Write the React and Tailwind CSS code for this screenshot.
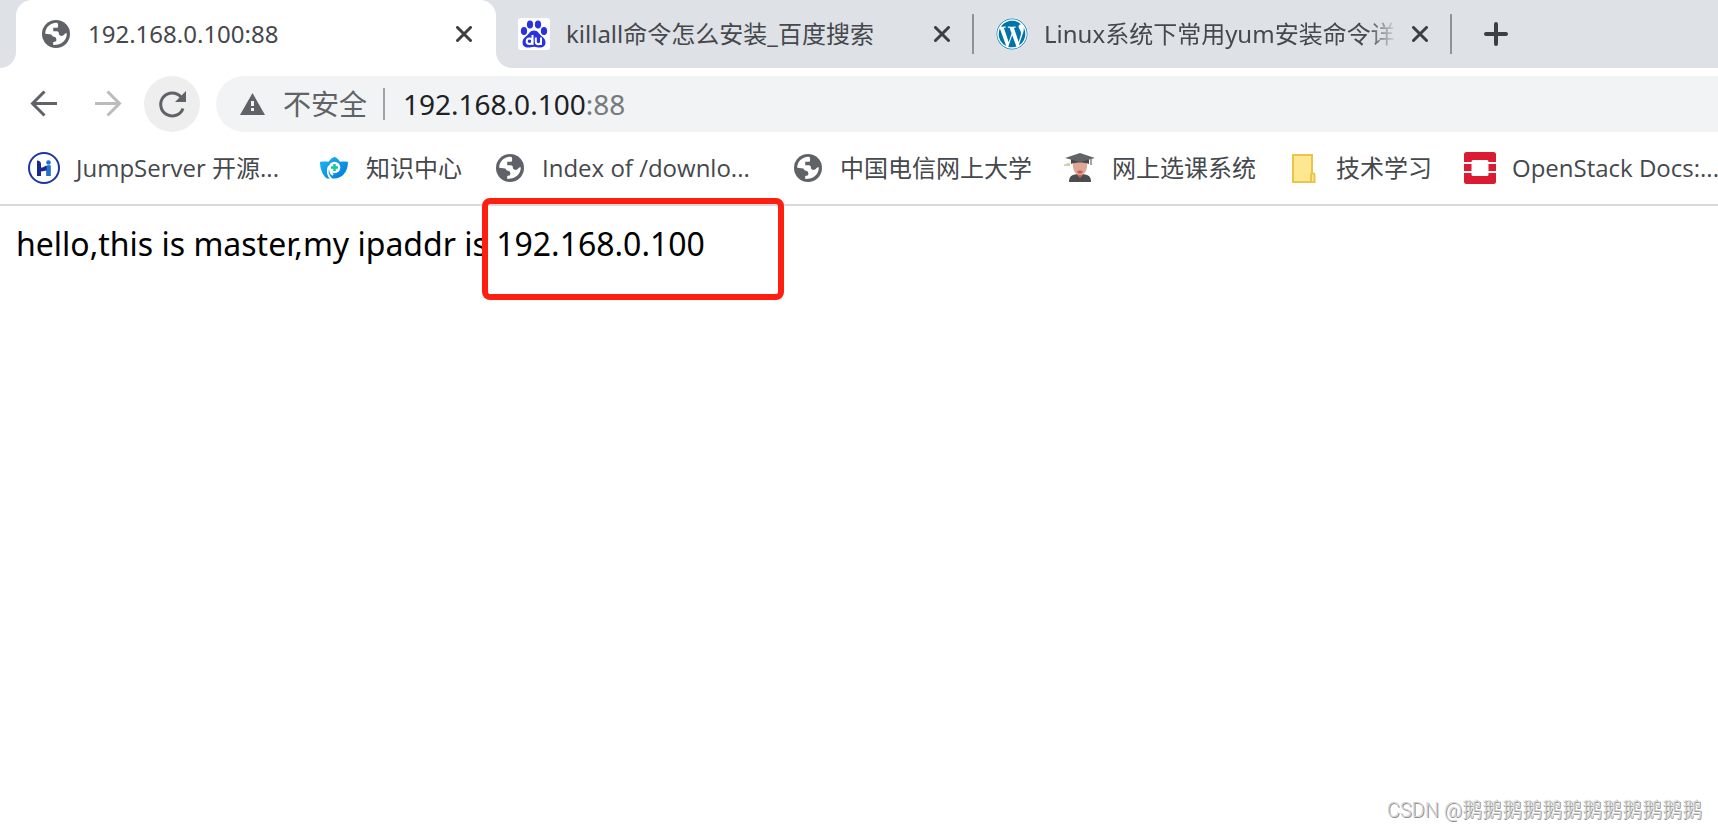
import React from "react";
import { FaWordpress } from "react-icons/fa";

const GlobeIcon = () => (
  <svg viewBox="0 0 32 32" className="size-8 shrink-0">
    <circle cx="16" cy="16" r="14" fill="#5f6368" />
    <path
      d="M5.200 15.800C5.200 9.500 10 4.800 16.500 4.700c1.200.2 1.600.8 1.600 1.800v1.800c0 1-.6 1.500-1.600 1.500h-3.300v3.500h3.600c1.200 0 2 .7 2 1.800 0 1.800.8 2.800 2.600 2.800 1.400 0 2.200-.6 3-1.700.8-1 1.600-1 2.400-.8.1 6.600-5 11.700-13.600 11.600v-3c2.200 0 3.200-.8 3.200-2.200 0-1.600-.8-3-2.400-3.100-1.500-.2-2-1-2.600-2.200z"
      fill="#fff"
    />
  </svg>
);

const BaiduIcon = () => (
  <svg viewBox="0 0 32 32" className="size-8 shrink-0">
    <rect width="32" height="32" rx="3" fill="#fff" />
    <g fill="#2932e1">
      <ellipse cx="12" cy="6.500" rx="3.100" ry="4" />
      <ellipse cx="20" cy="6.500" rx="3.100" ry="4" />
      <ellipse cx="6" cy="13" rx="3.100" ry="4" />
      <ellipse cx="26" cy="13" rx="3.100" ry="4" />
      <path d="M16 12.500c4 0 4.500 3 7.500 5.500 2.800 2 4 4 4 6.500 0 3-2.200 5-5.500 5-2.500 0-3.500-.8-6-.8s-3.500.8-6 .8c-3.300 0-5.500-2-5.500-5 0-2.500 1.200-4.500 4-6.500 3-2.500 3.500-5.500 7.500-5.500z" />
    </g>
    <g fill="none" stroke="#fff" strokeWidth="2">
      <circle cx="11.500" cy="23.200" r="2.800" />
      <path d="M14.500 17v10M17.800 19.500v4.300c0 3.200 5.200 3.200 5.200 0v-4.300M23 20v7" />
    </g>
  </svg>
);

const JumpServerIcon = () => (
  <svg viewBox="0 0 32 32" className="size-8 shrink-0">
    <circle cx="16" cy="16" r="15" fill="#fff" stroke="#1f35a4" strokeWidth="2" />
    <path d="M9 8.500c2.500 0 4 1.500 4 3.500v3.500c1 0 2 0 3-.8 1.500-1 3-1.200 6.500-1.200V24h-4v-5.500c-2 0-3 1-5.500 1V24H9z" fill="#17288f" />
    <path d="M18.500 14c1-.4 2-.5 4-.5V24h-4z" fill="#1a73cf" />
    <circle cx="20.500" cy="10.500" r="2.300" fill="#1a6fe0" />
  </svg>
);

const KnowledgeIcon = () => (
  <svg viewBox="0 0 32 32" className="size-8 shrink-0">
    <defs>
      <linearGradient id="know" x1="0" y1="0" x2="1" y2="1">
        <stop offset="0" stopColor="#22b8f5" />
        <stop offset="1" stopColor="#0078d7" />
      </linearGradient>
    </defs>
    <path
      d="M2 10c3-.8 6-.6 8.500-.2C12 7.500 14 5.800 16.500 4.700 19 5.800 20.500 7.500 22 9.800c2.500-.4 5-.6 8 .2 0 5-1.500 9-4 12-2.500 2.800-6 4.500-9.500 4.500H9C4.500 23.500 2 16.500 2 10z"
      fill="url(#know)"
    />
    <circle cx="16.500" cy="15.500" r="5.800" fill="#fff" />
    <path d="M11 14c-2.500 5-1 10 2.500 13M12 18c.5 3 1.500 4 3 5" fill="none" stroke="#fff" strokeWidth="2" />
    <path d="M16.500 12v7M13 15.500h7" stroke="#12c99b" strokeWidth="2.500" />
  </svg>
);

const StudentIcon = () => (
  <svg viewBox="0 0 32 32" className="size-8 shrink-0">
    <path d="M0 12.500l6-2v3.500H0z" fill="#d3d0b0" />
    <path d="M5 30c0-6 3-8 11-8s11 2 11 8z" fill="#4c4d50" />
    <path d="M12 22h8l-4 4z" fill="#c9634f" />
    <path d="M9 10h14c1 7-2 13-7 13s-8-6-7-13z" fill="#dea797" />
    <path d="M13 19.500c1.500-1.500 4.500-1.500 6 0l-1.500 2h-3z" fill="#b96458" />
    <path d="M7 7h18v5c-5-2-13-2-18 0z" fill="#47494b" />
    <path d="M1 6l15-5 15 5-15 4z" fill="#626466" />
    <path d="M27 7v6" stroke="#85878a" strokeWidth="1.500" />
  </svg>
);

const FolderIcon = () => (
  <svg viewBox="0 0 32 32" className="size-8 shrink-0">
    <path d="M5 3h19v19h2v8H5z" fill="#ffe690" stroke="#e9c54b" strokeWidth="2" />
    <path d="M23 30v-7.500c0-1.500 3.500-1.500 3.500 0V30z" fill="#ffe690" stroke="#e9c54b" strokeWidth="2" />
  </svg>
);

const OpenStackIcon = () => (
  <svg viewBox="0 0 32 32" className="size-8 shrink-0" fill="#dc1b33">
    <path d="M2.500 0h27A2.500 2.500 0 0 1 32 2.500V10h-7.500V9.500a1.500 1.500 0 0 0-1.500-1.500H9a1.500 1.500 0 0 0-1.500 1.500v.5H0V2.500A2.500 2.500 0 0 1 2.500 0zM0 12h7.500v7H0zM24.500 12H32v7h-7.500zM0 21h7.500v1.500A1.500 1.500 0 0 0 9 24h14a1.500 1.500 0 0 0 1.500-1.500V21H32v8.500a2.500 2.500 0 0 1-2.500 2.500h-27A2.500 2.500 0 0 1 0 29.500z" />
  </svg>
);

const WordPressIcon = () => (
  <span className="flex size-8 shrink-0 items-center justify-center rounded-full bg-white">
    <FaWordpress className="size-8 text-[#0073aa]" />
  </span>
);

const CloseButton = () => (
  <button type="button" aria-label="Close tab" className="shrink-0">
    <svg viewBox="0 0 16 16" className="size-4" fill="none" stroke="#3c4043" strokeWidth="3" strokeLinecap="round">
      <path d="M1.500 1.500l13 13M14.500 1.500l-13 13" />
    </svg>
  </button>
);

const bookmarks = [
  { label: "JumpServer 开源...", Icon: JumpServerIcon, width: "min-w-[210px]" },
  { label: "知识中心", Icon: KnowledgeIcon },
  { label: "Index of /downlo...", Icon: GlobeIcon, width: "min-w-[218px]" },
  { label: "中国电信网上大学", Icon: GlobeIcon },
  { label: "网上选课系统", Icon: StudentIcon },
  { label: "技术学习", Icon: FolderIcon },
  { label: "OpenStack Docs:...", Icon: OpenStackIcon },
];

const TabStrip = () => (
  <div className="flex h-17 bg-[#dee1e6] text-2xl text-[#45484c]">
    <div className="w-4 shrink-0 bg-white">
      <div className="h-full rounded-br-2xl bg-[#dee1e6]" />
    </div>
    <div className="flex w-120 shrink-0 items-center rounded-t-2xl bg-white px-6">
      <GlobeIcon />
      <span className="ml-4 flex-1 whitespace-nowrap">192.168.0.100:88</span>
      <CloseButton />
    </div>
    <div className="flex flex-1 bg-white">
      <div className="flex flex-1 items-center rounded-bl-2xl bg-[#dee1e6]">
        <div className="flex h-10 w-[478px] shrink-0 items-center border-r-2 border-[#8f9297] px-5.5">
          <BaiduIcon />
          <span className="ml-4 flex-1 whitespace-nowrap">killall命令怎么安装_百度搜索</span>
          <CloseButton />
        </div>
        <div className="flex h-10 w-[478px] shrink-0 items-center border-r-2 border-[#8f9297] px-5.5">
          <WordPressIcon />
          {/* the title fades out before the close button */}
          <span className="ml-4 flex-1 whitespace-nowrap mask-r-from-88% mask-r-to-96%">
            Linux系统下常用yum安装命令详
          </span>
          <CloseButton />
        </div>
        <button type="button" aria-label="New tab" className="ml-8">
          <svg viewBox="0 0 24 24" className="size-6" fill="none" stroke="#3c4043" strokeWidth="4" strokeLinecap="round">
            <path d="M12 2v20M2 12h20" />
          </svg>
        </button>
      </div>
    </div>
  </div>
);

const Toolbar = () => (
  <div className="flex h-14 items-center">
    <button type="button" aria-label="Back" className="ml-7">
      <svg viewBox="0 0 32 32" className="size-8" fill="none" stroke="#5f6368" strokeWidth="3">
        <path d="M29 15.500H5M16.500 3.500l-12 12 12 12" />
      </svg>
    </button>
    <button type="button" aria-label="Forward" className="ml-8">
      <svg viewBox="0 0 32 32" className="size-8" fill="none" stroke="#babcbe" strokeWidth="3">
        <path d="M3 15.500h24M15.500 3.500l12 12-12 12" />
      </svg>
    </button>
    <button
      type="button"
      aria-label="Reload"
      className="ml-5 flex size-14 shrink-0 items-center justify-center rounded-full bg-[#eeeeee]"
    >
      <svg viewBox="0 0 32 32" className="size-8">
        <path d="M27 20.500A11.500 11.500 0 1 1 25 9" fill="none" stroke="#5f6368" strokeWidth="3" />
        <path d="M30 3v11H19z" fill="#5f6368" />
      </svg>
    </button>
    <div className="ml-4 flex h-14 flex-1 items-center rounded-l-full bg-[#f1f3f4] pl-6 text-[28px]">
      <svg viewBox="0 0 25 22" className="h-5.5 w-[25px]">
        <path d="M12.500 0L25 22H0z" fill="#5f6368" />
        <path d="M11 8h3v5h-3zM11 15h3v3h-3z" fill="#f1f3f4" />
      </svg>
      <span className="ml-4.5 text-[#5f6368]">不安全</span>
      <span className="ml-4 h-8 w-0.5 bg-[#a0a3a7]" />
      <span className="ml-4.5 text-[#202124]">
        192.168.0.100<span className="text-[#76797d]">:88</span>
      </span>
    </div>
  </div>
);

const BookmarksBar = () => (
  <nav className="flex h-18.5 items-center gap-8 overflow-hidden border-b-2 border-[#dadada] pl-7 font-['Open_Sans','Noto_Sans_CJK_SC',sans-serif] text-2xl text-[#45484c]">
    {bookmarks.map(({ label, Icon, width }) => (
      <a key={label} href="#" className="flex shrink-0 items-center gap-4 whitespace-nowrap">
        <Icon />
        <span className={width}>{label}</span>
      </a>
    ))}
  </nav>
);

export default function App() {
  return (
    <div className="relative flex min-h-screen flex-col overflow-hidden bg-white font-['Noto_Sans','Noto_Sans_CJK_SC',sans-serif]">
      <TabStrip />
      <div className="pt-2">
        <Toolbar />
      </div>
      <BookmarksBar />
      <main className="flex-1 px-4 pt-4 text-[32px] leading-[44px] text-black">
        <p className="whitespace-nowrap">
          hello,this is master,my ipaddr is{" "}
          <span className="relative">
            192.168.0.100
            <span className="absolute -top-6 -left-3.5 h-[102px] w-[302px] rounded-lg border-6 border-[#ff1f10]" />
          </span>
        </p>
      </main>
      <footer className="flex justify-end px-4 pb-1.5 font-[Roboto,'Noto_Sans_CJK_SC',sans-serif] text-xl font-light text-[#d4d4d4] [text-shadow:1px_1px_0_#8c8c8c]">
        CSDN @鹅鹅鹅鹅鹅鹅鹅鹅鹅鹅鹅鹅
      </footer>
    </div>
  );
}
